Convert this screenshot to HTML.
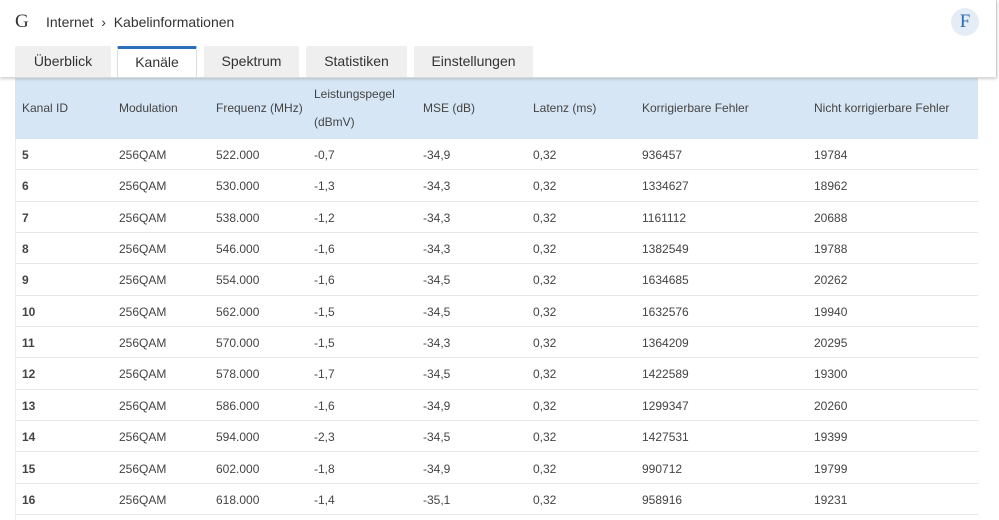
<!DOCTYPE html>
<html><head><style>
*{margin:0;padding:0;box-sizing:border-box}
html,body{width:999px;height:520px;overflow:hidden}
body{background:#fff;font-family:"Liberation Sans",sans-serif;color:#333;position:relative}
.hdr{position:absolute;left:0;top:0;width:997px;height:77px;background:#fff;border-right:1px solid #ccc;box-shadow:0 2px 3px rgba(0,0,0,.18);z-index:2}
.g{position:absolute;left:15px;top:11px;font-family:"Liberation Serif",serif;font-size:19px;color:#333}
.bc{position:absolute;left:46px;top:14px;font-size:14px;color:#333}
.f{position:absolute;left:951px;top:8px;width:28px;height:28px;border-radius:50%;background:#e4edf6;color:#2f6db0;font-family:"Liberation Serif",serif;font-size:19px;text-align:center;line-height:28px}
.tab{position:absolute;top:46px;height:31px;background:#efefef;font-size:14px;color:#333;text-align:center;line-height:30px;border-radius:2px 2px 0 0}
.tab.a{background:#fff;border-top:3px solid #2a6fb8;line-height:26px;border-left:1px solid #ddd;border-right:1px solid #ddd}
.th{position:absolute;left:15px;top:78px;width:963px;height:61px;background:#d6e6f4}
.c{position:absolute;font-size:12px;color:#444;white-space:nowrap}
.row{position:absolute;left:15px;width:963px;border-bottom:1px solid #e6e6e6;height:31.35px}
.lb{position:absolute;left:15px;top:139px;width:1px;height:381px;background:#eee}
</style></head><body>
<div class="hdr">
<div class="g">G</div>
<div class="bc">Internet&nbsp;&nbsp;›&nbsp;&nbsp;Kabelinformationen</div>
<div class="f">F</div>
<div class="tab" style="left:15px;width:96px">Überblick</div>
<div class="tab a" style="left:117px;width:80px">Kanäle</div>
<div class="tab" style="left:204px;width:95px">Spektrum</div>
<div class="tab" style="left:306px;width:101px">Statistiken</div>
<div class="tab" style="left:414px;width:119px">Einstellungen</div>
</div>
<div class="th"></div>
<div class="lb"></div>
<div class="c" style="left:22px;top:101px">Kanal ID</div>
<div class="c" style="left:119px;top:101px">Modulation</div>
<div class="c" style="left:216px;top:101px">Frequenz (MHz)</div>
<div class="c" style="left:314px;top:87px">Leistungspegel</div>
<div class="c" style="left:314px;top:115px">(dBmV)</div>
<div class="c" style="left:423px;top:101px">MSE (dB)</div>
<div class="c" style="left:533px;top:101px">Latenz (ms)</div>
<div class="c" style="left:642px;top:101px">Korrigierbare Fehler</div>
<div class="c" style="left:814px;top:101px">Nicht korrigierbare Fehler</div>
<div id="rows"></div>
<script>
var d=[[5,522,"-0,7","-34,9",936457,19784],[6,530,"-1,3","-34,3",1334627,18962],[7,538,"-1,2","-34,3",1161112,20688],[8,546,"-1,6","-34,3",1382549,19788],[9,554,"-1,6","-34,5",1634685,20262],[10,562,"-1,5","-34,5",1632576,19940],[11,570,"-1,5","-34,3",1364209,20295],[12,578,"-1,7","-34,5",1422589,19300],[13,586,"-1,6","-34,9",1299347,20260],[14,594,"-2,3","-34,5",1427531,19399],[15,602,"-1,8","-34,9",990712,19799],[16,618,"-1,4","-35,1",958916,19231]];
var h="";
d.forEach(function(r,i){var t=139+31.35*i;var y=t+9;
h+='<div class="row" style="top:'+t+'px"></div>';
var v=[r[0],"256QAM",r[1]+".000",r[2],r[3],"0,32",r[4],r[5]],x=[22,119,216,314,423,533,642,814];
for(var k=0;k<8;k++)h+='<div class="c" style="left:'+x[k]+'px;top:'+y+'px'+(k==0?';font-weight:bold;color:#444':'')+'">'+v[k]+'</div>';});
document.getElementById("rows").innerHTML=h;
</script>
</body></html>
